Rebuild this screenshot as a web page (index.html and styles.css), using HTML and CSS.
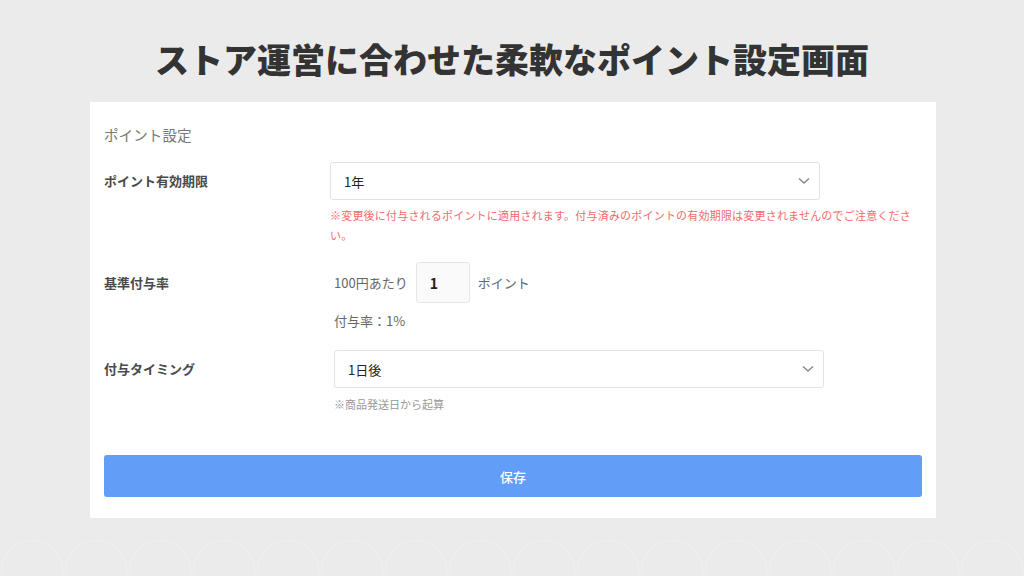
FILE: index.html
```html
<!DOCTYPE html>
<html lang="ja">
<head>
<meta charset="utf-8">
<title>ポイント設定</title>
<link rel="stylesheet" href="styles.css">
</head>
<body>
<div class="page">
  <h1 class="title">ストア運営に合わせた柔軟なポイント設定画面</h1>
  <div class="card">
    <div class="card-title">ポイント設定</div>

    <div class="row row-expire">
      <div class="label">ポイント有効期限</div>
      <div class="content">
        <div class="select">
          <span>1年</span>
          <svg class="chev" width="12" height="8" viewBox="0 0 12 8"><path d="M1 1.5 L6 6 L11 1.5" fill="none" stroke="#8a8a8a" stroke-width="1.6"/></svg>
        </div>
      </div>
    </div>
    <div class="row">
      <div></div>
      <div class="note-red">※変更後に付与されるポイントに適用されます。付与済みのポイントの有効期限は変更されませんのでご注意ください。</div>
    </div>

    <div class="row row-rate">
      <div class="label">基準付与率</div>
      <div class="content shifted rate-line">
        <span class="muted">100円あたり</span>
        <div class="num-input">1</div>
        <span class="muted">ポイント</span>
      </div>
    </div>
    <div class="row">
      <div></div>
      <div class="shifted rate-text">付与率：1%</div>
    </div>

    <div class="row row-timing">
      <div class="label">付与タイミング</div>
      <div class="content shifted">
        <div class="select">
          <span>1日後</span>
          <svg class="chev" width="12" height="8" viewBox="0 0 12 8"><path d="M1 1.5 L6 6 L11 1.5" fill="none" stroke="#8a8a8a" stroke-width="1.6"/></svg>
        </div>
      </div>
    </div>
    <div class="row">
      <div></div>
      <div class="shifted note-gray">※商品発送日から起算</div>
    </div>

    <button class="save">保存</button>
  </div>
  <div class="arches">
    <svg width="1024" height="37" viewBox="0 0 1024 37">
      <defs>
        <pattern id="arch" x="0" y="0" width="64" height="37" patternUnits="userSpaceOnUse">
          <path d="M1.5 37 L1.5 32 A30.5 30.5 0 0 1 62.5 32 L62.5 37" fill="none" stroke="#efefef" stroke-width="1.2"/>
        </pattern>
      </defs>
      <rect x="0" y="0" width="1024" height="37" fill="url(#arch)"/>
    </svg>
  </div>
</div>
</body>
</html>
```

FILE: styles.css
```css
* { box-sizing: border-box; }
html, body {
  margin: 0;
  padding: 0;
  background: #ebebeb;
}
body {
  font-family: "Noto Sans CJK JP", "Noto Sans", sans-serif;
  color: #444;
}
.page {
  width: 1024px;
  height: 576px;
  display: flex;
  flex-direction: column;
  overflow: hidden;
}
.title {
  margin: 0;
  height: 102px;
  padding-top: 36px;
  text-align: center;
  font-size: 34px;
  line-height: 46px;
  font-weight: 900;
  color: #333;
  letter-spacing: 0;
}
.card {
  margin: 0 88px 0 90px;
  background: #fff;
  padding: 23px 14px 21px 14px;
}
.card-title {
  font-size: 14.6px;
  line-height: 20px;
  color: #777;
}
.row {
  display: grid;
  grid-template-columns: 226px 1fr;
  align-items: center;
}
.row-expire { margin-top: 17px; }
.row-rate { margin-top: 17px; }
.row-timing { margin-top: 19px; }
.label {
  font-size: 13px;
  font-weight: bold;
  color: #4a4a4a;
  line-height: 18px;
}
.content { display: flex; }
.shifted { padding-left: 4px; }
.select {
  width: 490px;
  height: 38px;
  border: 1px solid #e2e2e2;
  border-radius: 3px;
  display: flex;
  align-items: center;
  justify-content: space-between;
  padding: 0 9px 0 13px;
  font-size: 13px;
  color: #222;
  background: #fff;
}
.chev { display: block; }
.note-red {
  margin-top: 5px;
  font-size: 11px;
  letter-spacing: 0.2px;
  line-height: 20px;
  color: #f46a6a;
}
.rate-line {
  align-items: center;
  font-size: 13px;
}
.muted { color: #666; }
.num-input {
  width: 54px;
  height: 41px;
  margin: 0 8px 0 8px;
  border: 1px solid #e6e6e6;
  border-radius: 3px;
  background: #fafafa;
  display: flex;
  align-items: center;
  padding-left: 13px;
  font-size: 14px;
  font-weight: bold;
  color: #222;
}
.rate-text {
  margin-top: 8px;
  font-size: 13px;
  line-height: 20px;
  color: #666;
}
.note-gray {
  margin-top: 6px;
  font-size: 11px;
  line-height: 20px;
  color: #999;
}
.save {
  display: block;
  width: 100%;
  margin-top: 41px;
  height: 42px;
  border: none;
  border-radius: 3px;
  background: #629ef8;
  color: #fff;
  font-family: "Noto Sans CJK JP", sans-serif;
  font-size: 13px;
  font-weight: 500;
}
.arches {
  margin-top: auto;
  height: 37px;
}
.arches svg { display: block; }
```
